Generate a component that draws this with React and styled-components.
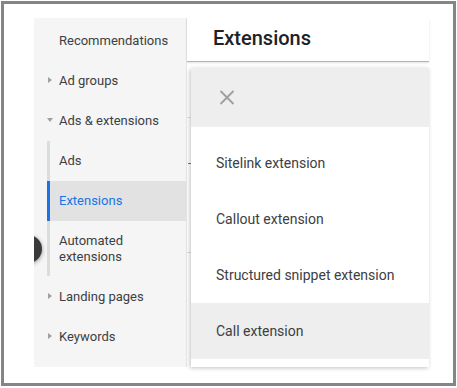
import React from "react";
import styled, { createGlobalStyle } from "styled-components";

const GlobalStyle = createGlobalStyle`
  body {
    margin: 0;
    background: #fff;
    font-family: Roboto, "Noto Sans", sans-serif;
  }
`;

const navItems = [
  { label: "Recommendations" },
  { label: "Ad groups", caret: "right" },
  { label: "Ads & extensions", caret: "down" },
];

const subItems = [
  { label: "Ads" },
  { label: "Extensions", active: true },
  { label: "Automated extensions", tall: true },
];

const lowerItems = [
  { label: "Landing pages", caret: "right" },
  { label: "Keywords", caret: "right" },
];

const menuItems = [
  "Sitelink extension",
  "Callout extension",
  "Structured snippet extension",
  "Call extension",
];

const App = () => {
  const renderNav = (item) => (
    <NavItem key={item.label}>
      <CaretSlot>{item.caret && <Caret $dir={item.caret} />}</CaretSlot>
      {item.label}
    </NavItem>
  );

  return (
    <>
      <GlobalStyle />
      <Frame>
        <Sidebar>
          <CollapseButton />
          {navItems.map(renderNav)}
          <SubGroup>
            {subItems.map((item) => (
              <SubItem key={item.label} $active={item.active} $tall={item.tall}>
                {item.tall ? (
                  <span>
                    Automated
                    <br />
                    extensions
                  </span>
                ) : (
                  item.label
                )}
              </SubItem>
            ))}
          </SubGroup>
          {lowerItems.map(renderNav)}
        </Sidebar>
        <Main>
          <Header>Extensions</Header>
          <TableBg>
            <BgRow $h={55} />
            <BgRow $h={134}>
              <Dash />
            </BgRow>
          </TableBg>
          <Menu>
            <MenuHeader>
              <svg width="16" height="15" viewBox="0 0 16 15">
                <path
                  d="M1.5 1 L14.5 14 M14.5 1 L1.5 14"
                  stroke="#9e9e9e"
                  strokeWidth="1.8"
                  fill="none"
                />
              </svg>
            </MenuHeader>
            <MenuList>
              {menuItems.map((label) => (
                <MenuItem key={label} $active={label === "Call extension"}>
                  {label}
                </MenuItem>
              ))}
            </MenuList>
          </Menu>
        </Main>
      </Frame>
    </>
  );
};

const Frame = styled.div`
  margin: 1px;
  width: 455px;
  height: 385px;
  box-sizing: border-box;
  border: 3px solid #858585;
  padding: 14px 0 0 30px;
  display: flex;
  align-items: flex-start;
  background: #fff;
  overflow: hidden;
`;

const Sidebar = styled.div`
  position: relative;
  flex: 0 0 153px;
  height: 349px;
  box-sizing: border-box;
  padding-top: 2px;
  background: #f5f5f5;
  border-right: 1px solid #e6e6e6;
  overflow: hidden;
  color: #3c4043;
  font-size: 13px;
`;

const CollapseButton = styled.div`
  position: absolute;
  left: -20px;
  top: 217px;
  width: 28px;
  height: 28px;
  border-radius: 50%;
  background: #3a3a3a;
  box-shadow: 0 1px 4px rgba(0, 0, 0, 0.4);
  z-index: 2;
`;

const NavItem = styled.div`
  height: 40px;
  display: flex;
  align-items: center;
  padding-left: 13px;
`;

const CaretSlot = styled.span`
  width: 12px;
  display: flex;
  align-items: center;
`;

const Caret = styled.span`
  width: 0;
  height: 0;
  ${({ $dir }) =>
    $dir === "down"
      ? `
    border-left: 3px solid transparent;
    border-right: 3px solid transparent;
    border-top: 4px solid #a0a0a0;
  `
      : `
    margin-left: 1px;
    border-top: 3px solid transparent;
    border-bottom: 3px solid transparent;
    border-left: 4px solid #a0a0a0;
  `}
`;

const SubGroup = styled.div`
  margin: 1px 0 0 13px;
  border-left: 3px solid #dcdcdc;
`;

const SubItem = styled.div`
  height: ${({ $tall }) => ($tall ? "55px" : "40px")};
  display: flex;
  align-items: center;
  padding-left: 9px;
  line-height: 16px;
  margin-left: -3px;
  border-left: 3px solid ${({ $active }) => ($active ? "#1a73e8" : "transparent")};
  background: ${({ $active }) => ($active ? "#e2e2e2" : "transparent")};
  color: ${({ $active }) => ($active ? "#1a73e8" : "#3c4043")};
`;

const Main = styled.div`
  position: relative;
  flex: 0 0 242px;
  height: 349px;
`;

const Header = styled.div`
  height: 44px;
  box-sizing: border-box;
  display: flex;
  align-items: center;
  padding: 0 0 4px 26px;
  font-size: 20px;
  font-weight: 500;
  color: #202124;
  border-bottom: 1px solid #b5b5b5;
  box-shadow: 0 1px 2px rgba(0, 0, 0, 0.12);
`;

const TableBg = styled.div`
  display: flex;
  flex-direction: column;
`;

const BgRow = styled.div`
  position: relative;
  height: ${({ $h }) => $h}px;
  border-bottom: 1px solid #e0e0e0;
`;

const Dash = styled.span`
  position: absolute;
  left: 1px;
  top: 45px;
  width: 5px;
  height: 1px;
  background: #777;
`;

const Menu = styled.div`
  position: absolute;
  left: 4px;
  top: 50px;
  width: 238px;
  height: 299px;
  background: #fff;
  border-radius: 3px 0 0 0;
  box-shadow: -1px 1px 4px rgba(0, 0, 0, 0.25);
  overflow: hidden;
`;

const MenuHeader = styled.div`
  height: 59px;
  display: flex;
  align-items: center;
  padding-left: 28px;
  background: #eeeeee;
`;

const MenuList = styled.div`
  padding: 8px 0;
`;

const MenuItem = styled.div`
  height: 56px;
  display: flex;
  align-items: center;
  padding-left: 25px;
  font-size: 14px;
  color: #3c4043;
  background: ${({ $active }) => ($active ? "#eeeeee" : "transparent")};
`;

export default App;
